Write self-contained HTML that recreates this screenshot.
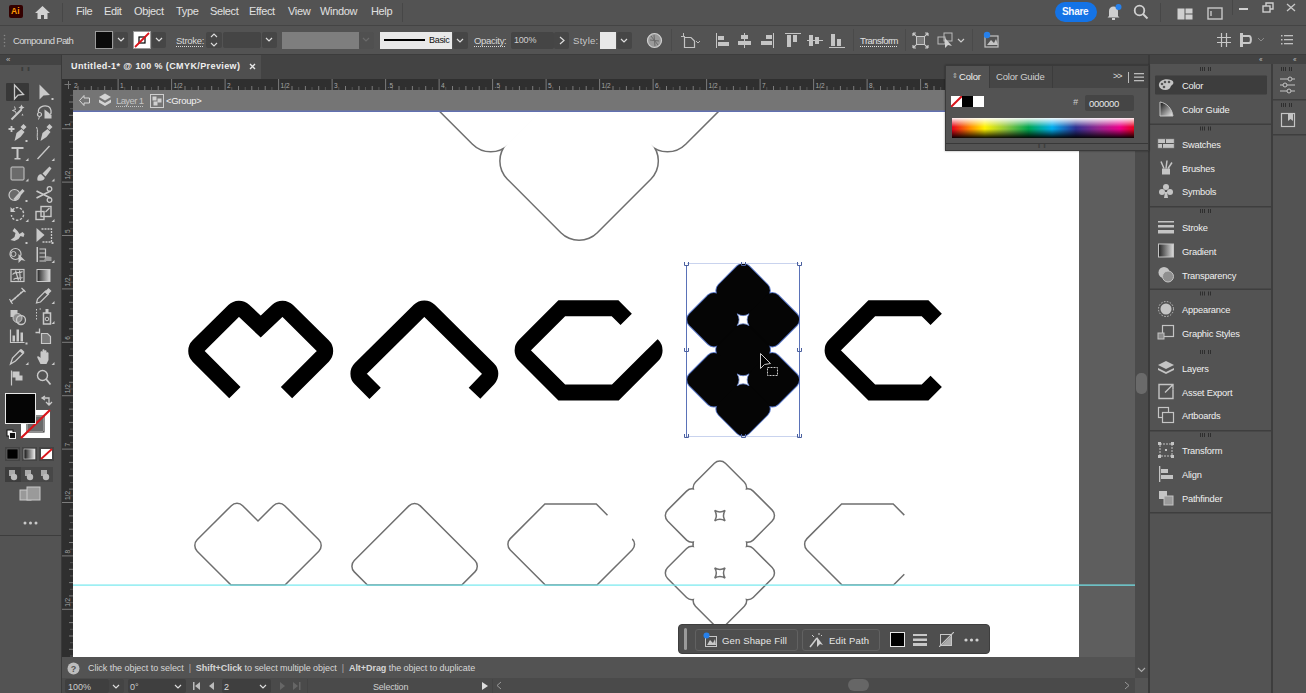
<!DOCTYPE html>
<html><head><meta charset="utf-8"><title>Illustrator</title>
<style>
*{margin:0;padding:0;box-sizing:border-box}
html,body{width:1306px;height:693px;overflow:hidden;background:#535353;font-family:"Liberation Sans",sans-serif;color:#e4e4e4;position:relative}
.abs{position:absolute}
.t{position:absolute;white-space:nowrap;line-height:1}
.menu{font-size:11px;color:#e0e0e0;top:6.3px;letter-spacing:-0.35px}
.lbl{font-size:9.5px;color:#d8d8d8;letter-spacing:-0.3px}
.u{text-decoration:underline dotted;text-underline-offset:2px}
.dd{position:absolute;background:#464646;border-radius:2px}
.fld{position:absolute;background:#454545;border-radius:2px}
.ic{position:absolute}
.dock{font-size:9px;color:#f2f2f2;letter-spacing:-0.2px}
.sep{position:absolute;background:#474747;width:1px}
</style></head><body>

<!-- ============ MENU BAR ============ -->
<div class="abs" style="left:0;top:0;width:1306px;height:25px;background:#535353"></div>
<div class="abs" style="left:0;top:25px;width:1306px;height:1px;background:#444"></div>
<!-- Ai logo -->
<div class="abs" style="left:9px;top:5px;width:14px;height:13px;background:#330000;border-radius:2px"></div>
<div class="t" style="left:11px;top:7px;font-size:8.5px;font-weight:bold;color:#ff9a00">Ai</div>
<!-- home -->
<svg class="ic" style="left:34px;top:5px" width="17" height="15" viewBox="0 0 17 15"><path d="M8.5,1 L16,8 L13.5,8 L13.5,14 L10,14 L10,10 L7,10 L7,14 L3.5,14 L3.5,8 L1,8 Z" fill="#d2d2d2"/></svg>
<div class="sep" style="left:62px;top:3px;height:19px"></div>
<div class="t menu" style="left:76px">File</div>
<div class="t menu" style="left:104px">Edit</div>
<div class="t menu" style="left:134px">Object</div>
<div class="t menu" style="left:176px">Type</div>
<div class="t menu" style="left:210px">Select</div>
<div class="t menu" style="left:249px">Effect</div>
<div class="t menu" style="left:288px">View</div>
<div class="t menu" style="left:320px">Window</div>
<div class="t menu" style="left:371px">Help</div>
<div class="sep" style="left:402px;top:3px;height:19px"></div>
<!-- share etc -->
<div class="abs" style="left:1055px;top:2px;width:42px;height:20px;background:#1473e6;border-radius:10px"></div>
<div class="t" style="left:1062px;top:7px;font-size:10px;font-weight:bold;color:#f4f8ff;letter-spacing:-0.3px">Share</div>
<svg class="ic" style="left:1106px;top:3px" width="16" height="18" viewBox="0 0 16 18"><path d="M3,13 L3,8 C3,5 5,3.5 7.5,3.5 C10,3.5 12,5 12,8 L12,13 L13.5,14.5 L1.5,14.5 Z" fill="#cfcfcf"/><rect x="6" y="15" width="3" height="2" fill="#cfcfcf"/><circle cx="12.5" cy="4" r="3" fill="#2680eb"/></svg>
<svg class="ic" style="left:1133px;top:4px" width="16" height="16" viewBox="0 0 16 16"><circle cx="6.5" cy="6.5" r="4.8" fill="none" stroke="#d0d0d0" stroke-width="1.8"/><path d="M10,10 L14.5,14.5" stroke="#d0d0d0" stroke-width="2"/></svg>
<div class="sep" style="left:1160px;top:3px;height:19px"></div>
<svg class="ic" style="left:1177px;top:8px" width="16" height="12" viewBox="0 0 16 12"><rect x="0.5" y="0.5" width="7" height="11" fill="#cfcfcf"/><rect x="8.5" y="0.5" width="7" height="5" fill="#cfcfcf"/><rect x="8.5" y="6.5" width="7" height="5" fill="#cfcfcf"/></svg>
<svg class="ic" style="left:1207px;top:7px" width="16" height="13" viewBox="0 0 16 13"><rect x="1" y="1" width="14" height="11" fill="none" stroke="#c8c8c8" stroke-width="1.4"/><rect x="3" y="4" width="2" height="5" fill="#c8c8c8" opacity=".7"/></svg>
<div class="sep" style="left:1232px;top:0;height:15px"></div>
<div class="abs" style="left:1239px;top:8px;width:9px;height:2px;background:#cfcfcf"></div>
<svg class="ic" style="left:1262px;top:2px" width="12" height="11" viewBox="0 0 12 11"><rect x="1" y="4" width="7" height="6" fill="none" stroke="#cfcfcf" stroke-width="1.4"/><path d="M4,4 L4,1 L11,1 L11,7 L8,7" fill="none" stroke="#cfcfcf" stroke-width="1.4"/></svg>
<svg class="ic" style="left:1286px;top:3px" width="10" height="9" viewBox="0 0 10 9"><path d="M1,1 L9,8 M9,1 L1,8" stroke="#c8c8c8" stroke-width="1.3"/></svg>

<!-- ============ CONTROL BAR ============ -->
<div class="abs" style="left:0;top:26px;width:1306px;height:28px;background:#535353"></div>
<div class="abs" style="left:0;top:54px;width:1306px;height:1px;background:#3c3c3c"></div>
<svg class="ic" style="left:3px;top:34px" width="3" height="14"><circle cx="1.5" cy="1.5" r="0.8" fill="#888"/><circle cx="1.5" cy="5" r="0.8" fill="#888"/><circle cx="1.5" cy="8.5" r="0.8" fill="#888"/><circle cx="1.5" cy="12" r="0.8" fill="#888"/></svg>
<div class="t lbl" style="left:13px;top:36px;letter-spacing:-0.65px">Compound Path</div>
<!-- fill swatch -->
<div class="abs" style="left:95px;top:31px;width:18px;height:18px;background:#0a0a0a;border:1px solid #9a9a9a"></div>
<div class="dd" style="left:114px;top:32px;width:14px;height:16px"></div>
<svg class="ic" style="left:117px;top:37px" width="8" height="5"><path d="M1,1 L4,4 L7,1" fill="none" stroke="#ddd" stroke-width="1.2"/></svg>
<!-- stroke swatch -->
<div class="abs" style="left:133px;top:31px;width:18px;height:18px;background:#fff;border:1px solid #9a9a9a;overflow:hidden"></div>
<svg class="ic" style="left:134px;top:32px" width="16" height="16"><rect x="5" y="5" width="6" height="6" fill="none" stroke="#000" stroke-width="1.2"/><path d="M1,15 L15,1" stroke="#d9141a" stroke-width="1.8"/></svg>
<div class="dd" style="left:152px;top:32px;width:14px;height:16px"></div>
<svg class="ic" style="left:155px;top:37px" width="8" height="5"><path d="M1,1 L4,4 L7,1" fill="none" stroke="#ddd" stroke-width="1.2"/></svg>
<div class="t lbl u" style="left:176px;top:36px">Stroke:</div>
<div class="dd" style="left:206px;top:32px;width:16px;height:16px"></div>
<svg class="ic" style="left:210px;top:33px" width="8" height="14"><path d="M1,4 L4,1 L7,4 M1,10 L4,13 L7,10" fill="none" stroke="#ddd" stroke-width="1.1"/></svg>
<div class="fld" style="left:223px;top:32px;width:38px;height:16px"></div>
<div class="dd" style="left:262px;top:32px;width:15px;height:16px"></div>
<svg class="ic" style="left:265px;top:37px" width="8" height="5"><path d="M1,1 L4,4 L7,1" fill="none" stroke="#ddd" stroke-width="1.2"/></svg>
<div class="abs" style="left:282px;top:32px;width:77px;height:17px;background:#7e7e7e"></div>
<div class="dd" style="left:359px;top:32px;width:15px;height:17px;background:#505050"></div>
<svg class="ic" style="left:362px;top:37px" width="8" height="5"><path d="M1,1 L4,4 L7,1" fill="none" stroke="#6a6a6a" stroke-width="1.2"/></svg>
<!-- stroke profile -->
<div class="abs" style="left:380px;top:32px;width:72px;height:17px;background:#e9e9e9"></div>
<div class="abs" style="left:384px;top:39px;width:41px;height:2px;background:#000"></div>
<div class="t" style="left:429px;top:36px;font-size:9px;color:#111;letter-spacing:-0.3px">Basic</div>
<div class="dd" style="left:453px;top:32px;width:15px;height:17px"></div>
<svg class="ic" style="left:456px;top:38px" width="8" height="5"><path d="M1,1 L4,4 L7,1" fill="none" stroke="#ddd" stroke-width="1.2"/></svg>
<div class="t lbl u" style="left:474px;top:36px">Opacity:</div>
<div class="fld" style="left:511px;top:32px;width:43px;height:17px"></div>
<div class="t" style="left:514px;top:36px;font-size:9px;color:#cfcfcf;letter-spacing:-0.2px">100%</div>
<div class="dd" style="left:554px;top:32px;width:15px;height:17px"></div>
<svg class="ic" style="left:559px;top:36px" width="6" height="9"><path d="M1,1 L5,4.5 L1,8" fill="none" stroke="#ddd" stroke-width="1.2"/></svg>
<div class="t lbl" style="left:573px;top:36px;color:#c8c8c8;letter-spacing:0.3px">Style:</div>
<div class="abs" style="left:600px;top:32px;width:16px;height:17px;background:#e8e8e8"></div>
<div class="dd" style="left:617px;top:32px;width:15px;height:17px"></div>
<svg class="ic" style="left:620px;top:38px" width="8" height="5"><path d="M1,1 L4,4 L7,1" fill="none" stroke="#ddd" stroke-width="1.2"/></svg>
<svg class="ic" style="left:646px;top:32px" width="17" height="17"><circle cx="8.5" cy="8.5" r="7" fill="#9a9a9a" stroke="#cfcfcf" stroke-width="1.2"/><path d="M4,8 L13,9 M8,3 L9,14 M5,4 L12,13" stroke="#6a6a6a" stroke-width="1"/></svg>
<div class="sep" style="left:671px;top:29px;height:22px;background:#4a4a4a"></div>
<!-- artboard icon -->
<svg class="ic" style="left:680px;top:32px" width="22" height="17"><path d="M3.5,1 L3.5,5 M1,4.5 L5,4.5" stroke="#bdbdbd" stroke-width="1"/><path d="M4.5,5.5 L11,5.5 L14.5,9 L14.5,15.5 L4.5,15.5 Z" fill="none" stroke="#c4c4c4" stroke-width="1.2"/><path d="M16,9 L18,11 L20,9" fill="none" stroke="#bdbdbd" stroke-width="1"/></svg>
<!-- align icons -->
<svg class="ic" style="left:715px;top:32px" width="132" height="17" fill="#c4c4c4">
<rect x="1" y="1" width="1" height="15"/><rect x="3" y="4" width="6" height="4"/><rect x="3" y="10" width="11" height="4"/>
<rect x="29" y="1" width="1" height="15"/><rect x="26" y="3" width="7" height="4"/><rect x="23" y="9" width="13" height="4"/>
<rect x="58" y="1" width="1" height="15"/><rect x="51" y="3" width="6" height="4"/><rect x="46" y="9" width="11" height="4"/>
<rect x="70" y="1" width="16" height="1"/><rect x="72" y="3" width="4" height="12"/><rect x="78" y="3" width="4" height="7"/>
<rect x="92" y="8" width="16" height="1"/><rect x="94" y="3" width="4" height="11"/><rect x="100" y="5" width="4" height="7"/>
<rect x="114" y="15" width="16" height="1"/><rect x="116" y="2" width="4" height="12"/><rect x="122" y="7" width="4" height="7"/>
</svg>
<div class="sep" style="left:853px;top:29px;height:22px;background:#4a4a4a"></div>
<div class="t lbl u" style="left:860px;top:36px;color:#e0e0e0;letter-spacing:-0.55px">Transform</div>
<div class="sep" style="left:905px;top:29px;height:22px;background:#4a4a4a"></div>
<svg class="ic" style="left:912px;top:32px" width="17" height="17"><rect x="4.5" y="4.5" width="8" height="8" fill="#7a7a7a" stroke="#c8c8c8" stroke-width="1"/><path d="M1,1 L4,4 M16,1 L13,4 M1,16 L4,13 M16,16 L13,13 M1,1 L1,4 M1,1 L4,1 M16,1 L13,1 M16,1 L16,4 M1,16 L1,13 M1,16 L4,16 M16,16 L13,16 M16,16 L16,13" stroke="#c8c8c8" stroke-width="1.2"/></svg>
<svg class="ic" style="left:937px;top:32px" width="30" height="17"><rect x="1" y="5" width="7" height="7" fill="none" stroke="#bbb" stroke-width="1"/><rect x="7" y="1" width="8" height="8" fill="none" stroke="#bbb" stroke-width="1"/><path d="M8,6 L8,16 L11,13 L15,14 Z" fill="#cfcfcf"/><path d="M21,7 L24,10 L27,7" fill="none" stroke="#ccc" stroke-width="1.2"/></svg>
<div class="sep" style="left:972px;top:29px;height:22px;background:#4a4a4a"></div>
<svg class="ic" style="left:983px;top:31px" width="18" height="18"><rect x="2" y="5" width="13" height="11" fill="none" stroke="#c4c4c4" stroke-width="1.2"/><path d="M4,14 L8,9 L11,12 L13,8 L15,14 Z" fill="#c4c4c4"/><circle cx="4" cy="4" r="3.2" fill="#2680eb"/></svg>
<!-- right of control bar -->
<svg class="ic" style="left:1217px;top:33px" width="14" height="14"><path d="M4.5,0 L4.5,14 M9.5,0 L9.5,14 M0,4.5 L14,4.5 M0,9.5 L14,9.5" stroke="#c8c8c8" stroke-width="1.2"/></svg>
<svg class="ic" style="left:1239px;top:32px" width="28" height="16"><rect x="1" y="1" width="3" height="14" fill="#c8c8c8"/><path d="M4,4 L10,4 C12.5,4 12.5,11 10,11 L4,11" fill="none" stroke="#c8c8c8" stroke-width="2"/><path d="M19,6 L22,9 L25,6" fill="none" stroke="#8a8a8a" stroke-width="1"/></svg>
<svg class="ic" style="left:1281px;top:35px" width="12" height="10" fill="#c0c0c0"><rect x="0" y="0" width="1.5" height="1.5"/><rect x="3" y="0" width="9" height="1.3"/><rect x="0" y="4" width="1.5" height="1.5"/><rect x="3" y="4" width="9" height="1.3"/><rect x="0" y="8" width="1.5" height="1.5"/><rect x="3" y="8" width="9" height="1.3"/></svg>

<!-- ============ LEFT TOOLBAR ============ -->
<div class="abs" style="left:0;top:55px;width:61px;height:638px;background:#535353"></div>
<div class="abs" style="left:0;top:55px;width:61px;height:10px;background:#434343"></div>
<div class="t" style="left:6px;top:56px;font-size:8px;color:#bbb;letter-spacing:-1px">&lsaquo;&lsaquo;</div>
<div class="abs" style="left:61px;top:55px;width:1px;height:638px;background:#3a3a3a"></div>
<div class="abs" style="left:0;top:535px;width:61px;height:1px;background:#3d3d3d"></div>
<div class="t" style="left:21px;top:66px;font-size:6px;color:#2a2a2a;letter-spacing:1px">&#8214; &#8214;</div>
<svg class="ic" style="left:0;top:0" width="61" height="540" viewBox="0 0 61 540">
<rect x="6" y="83" width="23" height="18" rx="1" fill="#383838"/>
<g transform="translate(17.5,92)"><path d="M-3,-7 L-3,7 L0.5,3 L6,2.5 Z" fill="none" stroke="#c9c9c9" stroke-width="1.3" stroke-linejoin="miter"/></g>
<g transform="translate(43.5,92)"><path d="M-4,-7.5 L-4,7.5 L0,3.5 L6.5,3 Z" fill="#c9c9c9"/><rect x="8" y="6" width="2" height="2" fill="#c9c9c9"/></g>
<g transform="translate(17.5,112.5)"><path d="M-6,7 L4,-3" stroke="#c9c9c9" stroke-width="2"/><path d="M-3,-6 L-2,-3 L-5,-2 L-2,-1 L-1,2" fill="none" stroke="#c9c9c9" stroke-width="1"/><path d="M4,-8 L5,-6 L7,-5 L5,-4 L4,-2 L3,-4 L1,-5 L3,-6Z" fill="#c9c9c9"/><path d="M5,1 L6,3 L4,3Z" fill="#c9c9c9"/></g>
<g transform="translate(43.5,112.5)"><path d="M-5,0 C-6,-5 0,-8 5,-6 C8,-4 8,0 7,2" fill="none" stroke="#c9c9c9" stroke-width="1.3"/><circle cx="-4" cy="2" r="2" fill="none" stroke="#c9c9c9" stroke-width="1.2"/><path d="M-4,4 L-5,7" stroke="#c9c9c9" stroke-width="1"/><path d="M1,-3 L1,6 L8,6 L8,3 L5,0 Z" fill="#c9c9c9"/></g>
<g transform="translate(17.5,133)"><path d="M-9,-4 L-3,-4 M-6,-7 L-6,-1" stroke="#c9c9c9" stroke-width="1.8"/><path d="M-3,8 L-1,0 L4,-4 L7,-1 L3,4 Z" fill="#c9c9c9"/><path d="M3,-6 L6,-9 L9,-6 L6,-3Z" fill="#c9c9c9"/><rect x="8" y="7" width="2" height="2" fill="#c9c9c9"/></g>
<g transform="translate(43.5,133)"><path d="M-7,-6 C-5,-3 -7,2 -6,7" fill="none" stroke="#c9c9c9" stroke-width="1"/><path d="M-3,8 L-1,0 L4,-4 L7,-1 L3,4 Z" fill="#c9c9c9"/><path d="M3,-6 L6,-9 L9,-6 L6,-3Z" fill="#c9c9c9"/></g>
<g transform="translate(17.5,153)"><path d="M-6,-6 L6,-6 L6,-4 L1,-4 L1,5 L3,5 L3,6.5 L-3,6.5 L-3,5 L-1,5 L-1,-4 L-6,-4 Z" fill="#c9c9c9"/><path d="M11,5 L11,8 L8,8Z" fill="#c9c9c9"/></g>
<g transform="translate(43.5,153)"><path d="M-6,6 L6,-7" stroke="#c9c9c9" stroke-width="1.3"/><path d="M11,5 L11,8 L8,8Z" fill="#c9c9c9"/></g>
<g transform="translate(17.5,173.5)"><rect x="-6.5" y="-6.5" width="13" height="13" rx="1" fill="#6b6b6b" stroke="#c9c9c9" stroke-width="1"/><path d="M11,5 L11,8 L8,8Z" fill="#c9c9c9"/></g>
<g transform="translate(43.5,173.5)"><path d="M-6,7 C-7,3 -4,0 -2,1 L1,4 C2,6 -2,8 -6,7Z" fill="#c9c9c9"/><path d="M-1,0 L6,-7 L8,-5 L2,3 Z" fill="#c9c9c9"/><path d="M11,5 L11,8 L8,8Z" fill="#c9c9c9"/></g>
<g transform="translate(17.5,194)"><circle cx="-3" cy="1" r="5.5" fill="#6b6b6b" stroke="#c9c9c9" stroke-width="1.2"/><path d="M-3,6 L6,-4" stroke="#c9c9c9" stroke-width="3"/><rect x="8" y="6" width="2" height="2" fill="#c9c9c9"/></g>
<g transform="translate(43.5,194)"><path d="M-7,-3 L7,4 M-7,4 L7,-3" stroke="#c9c9c9" stroke-width="1.8"/><circle cx="6" cy="-5" r="2.3" fill="none" stroke="#c9c9c9" stroke-width="1.3"/><circle cx="6" cy="6" r="2.3" fill="none" stroke="#c9c9c9" stroke-width="1.3"/></g>
<g transform="translate(17.5,214)"><path d="M-5,-4 C-2,-8 5,-7 6,-1 C7,4 2,7 -2,6 C-5,5 -6,3 -6,1" fill="none" stroke="#c9c9c9" stroke-width="1.4" stroke-dasharray="2.5,1.5"/><path d="M-7,-7 L-7,-2 L-2,-2 Z" fill="#c9c9c9"/><path d="M11,5 L11,8 L8,8Z" fill="#c9c9c9"/></g>
<g transform="translate(43.5,214)"><rect x="-2.5" y="-7.5" width="10" height="10" fill="none" stroke="#c9c9c9" stroke-width="1.4"/><rect x="-7.5" y="-2.5" width="8" height="8" fill="none" stroke="#c9c9c9" stroke-width="1.4"/><path d="M2,-2 L6,-6" stroke="#c9c9c9" stroke-width="1.2"/><path d="M11,5 L11,8 L8,8Z" fill="#c9c9c9"/></g>
<g transform="translate(17.5,235)"><path d="M-7,5 L-3,2 L-2,-2 L-5,-4 L-3,-7 L0,-4 L2,-1 L5,-3 L7,-1 L6,2 L3,1 L1,4 L-3,6 Z" fill="#c9c9c9"/><rect x="8" y="7" width="2" height="2" fill="#c9c9c9"/></g>
<g transform="translate(43.5,235)"><path d="M-7,-7 L-7,7 L1,0 Z" fill="#c9c9c9"/><path d="M-2,-6 L8,-6 L8,7 L-2,7" fill="none" stroke="#c9c9c9" stroke-width="1.3" stroke-dasharray="2,1"/><rect x="8" y="7" width="2" height="2" fill="#c9c9c9"/></g>
<g transform="translate(17.5,255)"><circle cx="-2" cy="-1" r="5.5" fill="none" stroke="#c9c9c9" stroke-width="1.2"/><circle cx="-4" cy="-1" r="2.5" fill="none" stroke="#c9c9c9" stroke-width="1"/><path d="M1,-1 L1,8 L4,5 L8,6 Z" fill="#c9c9c9"/></g>
<g transform="translate(43.5,255)"><rect x="-7" y="-8" width="1.5" height="15" fill="#c9c9c9"/><path d="M-4,-6 L2,-6 L2,6 L-4,6 M-4,-2 L2,-2 M-4,2 L2,2" fill="none" stroke="#c9c9c9" stroke-width="1.2"/><path d="M0,6 L8,6 L8,2 L3,1Z" fill="#9a9a9a"/><path d="M11,5 L11,8 L8,8Z" fill="#c9c9c9"/></g>
<g transform="translate(17.5,275.5)"><rect x="-6.5" y="-6" width="13" height="12" fill="none" stroke="#c9c9c9" stroke-width="1.2"/><path d="M-5,-1 C-2,-5 1,-1 5,-4 M-4,4 C-1,1 2,4 5,2 M-2,-5 L1,5 M2,-5 L3,5" fill="none" stroke="#c9c9c9" stroke-width="1.2"/></g>
<g transform="translate(43.5,275.5)"><defs><linearGradient id="gg"><stop offset="0" stop-color="#222"/><stop offset="1" stop-color="#ddd"/></linearGradient></defs><rect x="-6.5" y="-6" width="13" height="12" fill="url(#gg)" stroke="#c9c9c9" stroke-width="1"/></g>
<g transform="translate(17.5,296)"><path d="M-7,6 L7,-6" stroke="#c9c9c9" stroke-width="1.6"/><path d="M-8,3 L-5,8 M4,-8 L8,-4 M-3,2 L-2,3 M0,-1 L1,0 M3,-4 L4,-3" stroke="#c9c9c9" stroke-width="1.2"/></g>
<g transform="translate(43.5,296)"><path d="M-7,7 L-6,3 L2,-5 L5,-2 L-3,6 Z" fill="none" stroke="#c9c9c9" stroke-width="1.2"/><path d="M1,-4 L5,-8 L8,-5 L4,-1Z" fill="#c9c9c9"/><path d="M11,5 L11,8 L8,8Z" fill="#c9c9c9"/></g>
<g transform="translate(17.5,316)"><rect x="-7" y="-6" width="7" height="7" fill="#c9c9c9"/><circle cx="0" cy="2" r="4.5" fill="#8a8a8a" stroke="#c9c9c9" stroke-width="1"/><circle cx="3.5" cy="4" r="4.5" fill="none" stroke="#c9c9c9" stroke-width="1.3"/></g>
<g transform="translate(43.5,316)"><path d="M-7,-7 L-7,5 M-4,-7 L-2,-7" stroke="#c9c9c9" stroke-width="1" stroke-dasharray="1.5,1.5"/><path d="M0,-3 L7,-3 L7,8 L0,8 Z" fill="none" stroke="#c9c9c9" stroke-width="1.5"/><rect x="2" y="-7" width="3" height="4" fill="#c9c9c9"/><circle cx="3.5" cy="3" r="1.8" fill="none" stroke="#c9c9c9" stroke-width="1"/><path d="M11,5 L11,8 L8,8Z" fill="#c9c9c9"/></g>
<g transform="translate(17.5,336.5)"><path d="M-7,-7 L-7,6 L7,6" fill="none" stroke="#c9c9c9" stroke-width="1.2"/><rect x="-5" y="-1" width="2.5" height="6" fill="#c9c9c9"/><rect x="-1" y="-7" width="2.5" height="12" fill="#c9c9c9"/><rect x="3" y="-4" width="2.5" height="9" fill="#c9c9c9"/><rect x="8" y="6" width="2" height="2" fill="#c9c9c9"/></g>
<g transform="translate(43.5,336.5)"><path d="M-4,-8 L-4,-3 M-8,-4 L-4,-4" stroke="#c9c9c9" stroke-width="1.3"/><path d="M-2,-3 L4,-3 L7,0 L7,7 L-2,7 Z" fill="#7a7a7a" stroke="#c9c9c9" stroke-width="1.2"/></g>
<g transform="translate(17.5,357)"><path d="M-7,7 L-5,1 L3,-7 L6,-4 L-2,4 Z" fill="none" stroke="#c9c9c9" stroke-width="1.3"/><path d="M2,-6 L5,-3 L7,-5 L4,-8Z" fill="#c9c9c9"/><path d="M11,5 L11,8 L8,8Z" fill="#c9c9c9"/></g>
<g transform="translate(43.5,357)"><path d="M-3,7 L-6,1 C-7,-1 -5,-1 -4,0 L-3,1 L-3,-5 C-3,-6 -1,-6 -1,-5 L-1,-1 L-1,-7 C-1,-8 1,-8 1,-7 L1,-1 L1,-6 C1,-7 3,-7 3,-6 L3,-1 L3,-4 C3,-5 5,-5 5,-4 L5,3 L3,7 Z" fill="#c9c9c9"/><path d="M11,5 L11,8 L8,8Z" fill="#c9c9c9"/></g>
<g transform="translate(17.5,377.5)"><path d="M-6,-7 L-6,8" stroke="#c9c9c9" stroke-width="1.2"/><path d="M-5,-6 L2,-6 L2,-2 L5,-2 L5,3 L-2,3 L-2,0 L-5,0 Z" fill="#c9c9c9"/></g>
<g transform="translate(43.5,377.5)"><circle cx="-1" cy="-2" r="5" fill="none" stroke="#c9c9c9" stroke-width="1.4"/><path d="M2.5,1.5 L7,7" stroke="#c9c9c9" stroke-width="1.8"/></g>
<rect x="20.5" y="409.5" width="30" height="29" fill="#fff" stroke="#555" stroke-width="1"/>
<rect x="27" y="416" width="17" height="16" fill="none" stroke="#222" stroke-width="1"/><rect x="28" y="417" width="15" height="14" fill="#6a6a6a"/>
<path d="M21,438 L50,410" stroke="#d9141a" stroke-width="2.2"/>
<rect x="5.5" y="393.5" width="30" height="30" fill="#050505" stroke="#e8e8e8" stroke-width="1"/>
<path d="M42,398 L49,398 L49,405 M46,402 L49,405 L52,402 M45,396 L42,398 L45,400" fill="none" stroke="#c9c9c9" stroke-width="1.3"/>
<rect x="7" y="430" width="6" height="6" fill="#fff" stroke="#111" stroke-width="1"/><rect x="9.5" y="432.5" width="6" height="6" fill="#111" stroke="#eee" stroke-width="1"/>
<rect x="5" y="447" width="15" height="14" fill="#444"/><rect x="7" y="449" width="11" height="10" fill="#000" stroke="#777" stroke-width=".6"/>
<defs><linearGradient id="g2"><stop offset="0" stop-color="#111"/><stop offset="1" stop-color="#eee"/></linearGradient></defs>
<rect x="22" y="447" width="15" height="14" fill="#444"/><rect x="24" y="449" width="11" height="10" fill="url(#g2)" stroke="#ddd" stroke-width=".6"/>
<rect x="39" y="447" width="15" height="14" fill="#444"/><rect x="41" y="449" width="11" height="10" fill="#fff"/><path d="M41,459 L52,449" stroke="#d9141a" stroke-width="1.8"/>
<rect x="5" y="467" width="16" height="15" fill="#3d3d3d"/><rect x="21" y="467" width="16" height="15" fill="#474747"/><rect x="37" y="467" width="16" height="15" fill="#474747"/>
<rect x="9" y="470" width="6" height="6" fill="#aaa"/><circle cx="14" cy="477" r="3.2" fill="#bbb"/>
<rect x="25" y="470" width="6" height="6" fill="#aaa"/><circle cx="30" cy="477" r="3.2" fill="#bbb"/>
<rect x="41" y="470" width="6" height="6" fill="#aaa"/><circle cx="46" cy="477" r="3.2" fill="#bbb"/>
<rect x="20" y="490" width="11" height="10" fill="#999" stroke="#c9c9c9" stroke-width="1"/><rect x="27" y="487" width="13" height="13" fill="#9a9a9a" stroke="#c9c9c9" stroke-width="1"/>
<circle cx="25" cy="523" r="1.5" fill="#c9c9c9"/><circle cx="30.5" cy="523" r="1.5" fill="#c9c9c9"/><circle cx="36" cy="523" r="1.5" fill="#c9c9c9"/>
</svg>

<!-- ============ DOCUMENT AREA ============ -->
<div class="abs" style="left:62px;top:55px;width:1086px;height:24px;background:#434343"></div>
<div class="abs" style="left:62px;top:55px;width:199px;height:24px;background:#4f4f4f"></div>
<div class="t" style="left:71px;top:62.3px;font-size:9px;font-weight:bold;color:#f0f0f0;letter-spacing:0.4px">Untitled-1* @ 100 % (CMYK/Preview)</div>
<svg class="ic" style="left:249px;top:63px" width="7" height="7"><path d="M1,1 L6,6 M6,1 L1,6" stroke="#e8e8e8" stroke-width="1.4"/></svg>
<!-- rulers -->
<div class="abs" style="left:62px;top:79px;width:1086px;height:11px;background:#2f2f2f"></div>
<div class="abs" style="left:62px;top:90px;width:11px;height:567px;background:#2f2f2f"></div>
<svg class="ic" style="left:62px;top:79px" width="1086" height="578" viewBox="62 79 1086 578">
<rect x="77.5" y="86" width="1" height="4" fill="#7c7c7c"/>
<rect x="84.2" y="87" width="1" height="3" fill="#555555"/>
<rect x="90.8" y="86" width="1" height="4" fill="#7c7c7c"/>
<rect x="97.5" y="87" width="1" height="3" fill="#555555"/>
<rect x="104.2" y="86" width="1" height="4" fill="#7c7c7c"/>
<rect x="110.9" y="87" width="1" height="3" fill="#555555"/>
<rect x="117.6" y="79" width="1" height="11" fill="#7c7c7c"/>
<rect x="124.3" y="87" width="1" height="3" fill="#555555"/>
<rect x="131.0" y="86" width="1" height="4" fill="#7c7c7c"/>
<rect x="137.7" y="87" width="1" height="3" fill="#555555"/>
<rect x="144.3" y="86" width="1" height="4" fill="#7c7c7c"/>
<rect x="151.0" y="87" width="1" height="3" fill="#555555"/>
<rect x="157.7" y="86" width="1" height="4" fill="#7c7c7c"/>
<rect x="164.4" y="87" width="1" height="3" fill="#555555"/>
<text x="120.1" y="87.5" font-size="6.5" fill="#a8a8a8" font-family="Liberation Sans">1</text>
<rect x="171.1" y="79" width="1" height="11" fill="#7c7c7c"/>
<rect x="177.8" y="87" width="1" height="3" fill="#555555"/>
<rect x="184.5" y="86" width="1" height="4" fill="#7c7c7c"/>
<rect x="191.2" y="87" width="1" height="3" fill="#555555"/>
<rect x="197.8" y="86" width="1" height="4" fill="#7c7c7c"/>
<rect x="204.5" y="87" width="1" height="3" fill="#555555"/>
<rect x="211.2" y="86" width="1" height="4" fill="#7c7c7c"/>
<rect x="217.9" y="87" width="1" height="3" fill="#555555"/>
<text x="173.6" y="87.5" font-size="6.5" fill="#a8a8a8" font-family="Liberation Sans">1/2</text>
<rect x="224.6" y="79" width="1" height="11" fill="#7c7c7c"/>
<rect x="231.3" y="87" width="1" height="3" fill="#555555"/>
<rect x="238.0" y="86" width="1" height="4" fill="#7c7c7c"/>
<rect x="244.7" y="87" width="1" height="3" fill="#555555"/>
<rect x="251.3" y="86" width="1" height="4" fill="#7c7c7c"/>
<rect x="258.0" y="87" width="1" height="3" fill="#555555"/>
<rect x="264.7" y="86" width="1" height="4" fill="#7c7c7c"/>
<rect x="271.4" y="87" width="1" height="3" fill="#555555"/>
<text x="227.1" y="87.5" font-size="6.5" fill="#a8a8a8" font-family="Liberation Sans">2</text>
<rect x="278.1" y="79" width="1" height="11" fill="#7c7c7c"/>
<rect x="284.8" y="87" width="1" height="3" fill="#555555"/>
<rect x="291.5" y="86" width="1" height="4" fill="#7c7c7c"/>
<rect x="298.2" y="87" width="1" height="3" fill="#555555"/>
<rect x="304.9" y="86" width="1" height="4" fill="#7c7c7c"/>
<rect x="311.5" y="87" width="1" height="3" fill="#555555"/>
<rect x="318.2" y="86" width="1" height="4" fill="#7c7c7c"/>
<rect x="324.9" y="87" width="1" height="3" fill="#555555"/>
<text x="280.6" y="87.5" font-size="6.5" fill="#a8a8a8" font-family="Liberation Sans">1/2</text>
<rect x="331.6" y="79" width="1" height="11" fill="#7c7c7c"/>
<rect x="338.3" y="87" width="1" height="3" fill="#555555"/>
<rect x="345.0" y="86" width="1" height="4" fill="#7c7c7c"/>
<rect x="351.7" y="87" width="1" height="3" fill="#555555"/>
<rect x="358.4" y="86" width="1" height="4" fill="#7c7c7c"/>
<rect x="365.0" y="87" width="1" height="3" fill="#555555"/>
<rect x="371.7" y="86" width="1" height="4" fill="#7c7c7c"/>
<rect x="378.4" y="87" width="1" height="3" fill="#555555"/>
<text x="334.1" y="87.5" font-size="6.5" fill="#a8a8a8" font-family="Liberation Sans">3</text>
<rect x="385.1" y="79" width="1" height="11" fill="#7c7c7c"/>
<rect x="391.8" y="87" width="1" height="3" fill="#555555"/>
<rect x="398.5" y="86" width="1" height="4" fill="#7c7c7c"/>
<rect x="405.2" y="87" width="1" height="3" fill="#555555"/>
<rect x="411.9" y="86" width="1" height="4" fill="#7c7c7c"/>
<rect x="418.5" y="87" width="1" height="3" fill="#555555"/>
<rect x="425.2" y="86" width="1" height="4" fill="#7c7c7c"/>
<rect x="431.9" y="87" width="1" height="3" fill="#555555"/>
<text x="387.6" y="87.5" font-size="6.5" fill="#a8a8a8" font-family="Liberation Sans">.5</text>
<rect x="438.6" y="79" width="1" height="11" fill="#7c7c7c"/>
<rect x="445.3" y="87" width="1" height="3" fill="#555555"/>
<rect x="452.0" y="86" width="1" height="4" fill="#7c7c7c"/>
<rect x="458.7" y="87" width="1" height="3" fill="#555555"/>
<rect x="465.4" y="86" width="1" height="4" fill="#7c7c7c"/>
<rect x="472.0" y="87" width="1" height="3" fill="#555555"/>
<rect x="478.7" y="86" width="1" height="4" fill="#7c7c7c"/>
<rect x="485.4" y="87" width="1" height="3" fill="#555555"/>
<text x="441.1" y="87.5" font-size="6.5" fill="#a8a8a8" font-family="Liberation Sans">4</text>
<rect x="492.1" y="79" width="1" height="11" fill="#7c7c7c"/>
<rect x="498.8" y="87" width="1" height="3" fill="#555555"/>
<rect x="505.5" y="86" width="1" height="4" fill="#7c7c7c"/>
<rect x="512.2" y="87" width="1" height="3" fill="#555555"/>
<rect x="518.9" y="86" width="1" height="4" fill="#7c7c7c"/>
<rect x="525.5" y="87" width="1" height="3" fill="#555555"/>
<rect x="532.2" y="86" width="1" height="4" fill="#7c7c7c"/>
<rect x="538.9" y="87" width="1" height="3" fill="#555555"/>
<text x="494.6" y="87.5" font-size="6.5" fill="#a8a8a8" font-family="Liberation Sans">.5</text>
<rect x="545.6" y="79" width="1" height="11" fill="#7c7c7c"/>
<rect x="552.3" y="87" width="1" height="3" fill="#555555"/>
<rect x="559.0" y="86" width="1" height="4" fill="#7c7c7c"/>
<rect x="565.7" y="87" width="1" height="3" fill="#555555"/>
<rect x="572.4" y="86" width="1" height="4" fill="#7c7c7c"/>
<rect x="579.0" y="87" width="1" height="3" fill="#555555"/>
<rect x="585.7" y="86" width="1" height="4" fill="#7c7c7c"/>
<rect x="592.4" y="87" width="1" height="3" fill="#555555"/>
<text x="548.1" y="87.5" font-size="6.5" fill="#a8a8a8" font-family="Liberation Sans">5</text>
<rect x="599.1" y="79" width="1" height="11" fill="#7c7c7c"/>
<rect x="605.8" y="87" width="1" height="3" fill="#555555"/>
<rect x="612.5" y="86" width="1" height="4" fill="#7c7c7c"/>
<rect x="619.2" y="87" width="1" height="3" fill="#555555"/>
<rect x="625.9" y="86" width="1" height="4" fill="#7c7c7c"/>
<rect x="632.5" y="87" width="1" height="3" fill="#555555"/>
<rect x="639.2" y="86" width="1" height="4" fill="#7c7c7c"/>
<rect x="645.9" y="87" width="1" height="3" fill="#555555"/>
<text x="601.6" y="87.5" font-size="6.5" fill="#a8a8a8" font-family="Liberation Sans">1/2</text>
<rect x="652.6" y="79" width="1" height="11" fill="#7c7c7c"/>
<rect x="659.3" y="87" width="1" height="3" fill="#555555"/>
<rect x="666.0" y="86" width="1" height="4" fill="#7c7c7c"/>
<rect x="672.7" y="87" width="1" height="3" fill="#555555"/>
<rect x="679.4" y="86" width="1" height="4" fill="#7c7c7c"/>
<rect x="686.0" y="87" width="1" height="3" fill="#555555"/>
<rect x="692.7" y="86" width="1" height="4" fill="#7c7c7c"/>
<rect x="699.4" y="87" width="1" height="3" fill="#555555"/>
<text x="655.1" y="87.5" font-size="6.5" fill="#a8a8a8" font-family="Liberation Sans">6</text>
<rect x="706.1" y="79" width="1" height="11" fill="#7c7c7c"/>
<rect x="712.8" y="87" width="1" height="3" fill="#555555"/>
<rect x="719.5" y="86" width="1" height="4" fill="#7c7c7c"/>
<rect x="726.2" y="87" width="1" height="3" fill="#555555"/>
<rect x="732.9" y="86" width="1" height="4" fill="#7c7c7c"/>
<rect x="739.5" y="87" width="1" height="3" fill="#555555"/>
<rect x="746.2" y="86" width="1" height="4" fill="#7c7c7c"/>
<rect x="752.9" y="87" width="1" height="3" fill="#555555"/>
<text x="708.6" y="87.5" font-size="6.5" fill="#a8a8a8" font-family="Liberation Sans">1/2</text>
<rect x="759.6" y="79" width="1" height="11" fill="#7c7c7c"/>
<rect x="766.3" y="87" width="1" height="3" fill="#555555"/>
<rect x="773.0" y="86" width="1" height="4" fill="#7c7c7c"/>
<rect x="779.7" y="87" width="1" height="3" fill="#555555"/>
<rect x="786.4" y="86" width="1" height="4" fill="#7c7c7c"/>
<rect x="793.0" y="87" width="1" height="3" fill="#555555"/>
<rect x="799.7" y="86" width="1" height="4" fill="#7c7c7c"/>
<rect x="806.4" y="87" width="1" height="3" fill="#555555"/>
<text x="762.1" y="87.5" font-size="6.5" fill="#a8a8a8" font-family="Liberation Sans">7</text>
<rect x="813.1" y="79" width="1" height="11" fill="#7c7c7c"/>
<rect x="819.8" y="87" width="1" height="3" fill="#555555"/>
<rect x="826.5" y="86" width="1" height="4" fill="#7c7c7c"/>
<rect x="833.2" y="87" width="1" height="3" fill="#555555"/>
<rect x="839.9" y="86" width="1" height="4" fill="#7c7c7c"/>
<rect x="846.5" y="87" width="1" height="3" fill="#555555"/>
<rect x="853.2" y="86" width="1" height="4" fill="#7c7c7c"/>
<rect x="859.9" y="87" width="1" height="3" fill="#555555"/>
<text x="815.6" y="87.5" font-size="6.5" fill="#a8a8a8" font-family="Liberation Sans">1/2</text>
<rect x="866.6" y="79" width="1" height="11" fill="#7c7c7c"/>
<rect x="873.3" y="87" width="1" height="3" fill="#555555"/>
<rect x="880.0" y="86" width="1" height="4" fill="#7c7c7c"/>
<rect x="886.7" y="87" width="1" height="3" fill="#555555"/>
<rect x="893.4" y="86" width="1" height="4" fill="#7c7c7c"/>
<rect x="900.0" y="87" width="1" height="3" fill="#555555"/>
<rect x="906.7" y="86" width="1" height="4" fill="#7c7c7c"/>
<rect x="913.4" y="87" width="1" height="3" fill="#555555"/>
<text x="869.1" y="87.5" font-size="6.5" fill="#a8a8a8" font-family="Liberation Sans">8</text>
<rect x="920.1" y="79" width="1" height="11" fill="#7c7c7c"/>
<rect x="926.8" y="87" width="1" height="3" fill="#555555"/>
<rect x="933.5" y="86" width="1" height="4" fill="#7c7c7c"/>
<rect x="940.2" y="87" width="1" height="3" fill="#555555"/>
<rect x="946.9" y="86" width="1" height="4" fill="#7c7c7c"/>
<rect x="953.5" y="87" width="1" height="3" fill="#555555"/>
<rect x="960.2" y="86" width="1" height="4" fill="#7c7c7c"/>
<rect x="966.9" y="87" width="1" height="3" fill="#555555"/>
<text x="922.6" y="87.5" font-size="6.5" fill="#a8a8a8" font-family="Liberation Sans">.5</text>
<rect x="973.6" y="79" width="1" height="11" fill="#7c7c7c"/>
<rect x="980.3" y="87" width="1" height="3" fill="#555555"/>
<rect x="987.0" y="86" width="1" height="4" fill="#7c7c7c"/>
<rect x="993.7" y="87" width="1" height="3" fill="#555555"/>
<rect x="1000.4" y="86" width="1" height="4" fill="#7c7c7c"/>
<rect x="1007.0" y="87" width="1" height="3" fill="#555555"/>
<rect x="1013.7" y="86" width="1" height="4" fill="#7c7c7c"/>
<rect x="1020.4" y="87" width="1" height="3" fill="#555555"/>
<text x="976.1" y="87.5" font-size="6.5" fill="#a8a8a8" font-family="Liberation Sans">9</text>
<rect x="1027.1" y="79" width="1" height="11" fill="#7c7c7c"/>
<rect x="1033.8" y="87" width="1" height="3" fill="#555555"/>
<rect x="1040.5" y="86" width="1" height="4" fill="#7c7c7c"/>
<rect x="1047.2" y="87" width="1" height="3" fill="#555555"/>
<rect x="1053.8" y="86" width="1" height="4" fill="#7c7c7c"/>
<rect x="1060.5" y="87" width="1" height="3" fill="#555555"/>
<rect x="1067.2" y="86" width="1" height="4" fill="#7c7c7c"/>
<rect x="1073.9" y="87" width="1" height="3" fill="#555555"/>
<text x="1029.6" y="87.5" font-size="6.5" fill="#a8a8a8" font-family="Liberation Sans">.5</text>
<rect x="1080.6" y="79" width="1" height="11" fill="#7c7c7c"/>
<rect x="1087.3" y="87" width="1" height="3" fill="#555555"/>
<rect x="1094.0" y="86" width="1" height="4" fill="#7c7c7c"/>
<rect x="1100.7" y="87" width="1" height="3" fill="#555555"/>
<rect x="1107.3" y="86" width="1" height="4" fill="#7c7c7c"/>
<rect x="1114.0" y="87" width="1" height="3" fill="#555555"/>
<rect x="1120.7" y="86" width="1" height="4" fill="#7c7c7c"/>
<rect x="1127.4" y="87" width="1" height="3" fill="#555555"/>
<text x="1083.1" y="87.5" font-size="6.5" fill="#a8a8a8" font-family="Liberation Sans">10</text>
<rect x="1134.1" y="79" width="1" height="11" fill="#7c7c7c"/>
<rect x="1140.8" y="87" width="1" height="3" fill="#555555"/>
<text x="1136.6" y="87.5" font-size="6.5" fill="#a8a8a8" font-family="Liberation Sans">.5</text>
<text x="74" y="87.5" font-size="6.5" fill="#a8a8a8" font-family="Liberation Sans">2</text>
<path d="M64.5,84.5 L71,84.5 M68.5,81 L68.5,89" stroke="#777" stroke-width="1"/>
<rect x="70" y="94.8" width="3" height="1" fill="#555555"/>
<rect x="69" y="101.5" width="4" height="1" fill="#7c7c7c"/>
<rect x="70" y="108.2" width="3" height="1" fill="#555555"/>
<rect x="69" y="114.8" width="4" height="1" fill="#7c7c7c"/>
<rect x="70" y="121.5" width="3" height="1" fill="#555555"/>
<rect x="62" y="128.2" width="11" height="1" fill="#7c7c7c"/>
<rect x="70" y="134.9" width="3" height="1" fill="#555555"/>
<rect x="69" y="141.5" width="4" height="1" fill="#7c7c7c"/>
<rect x="70" y="148.2" width="3" height="1" fill="#555555"/>
<rect x="69" y="154.9" width="4" height="1" fill="#7c7c7c"/>
<rect x="70" y="161.6" width="3" height="1" fill="#555555"/>
<rect x="69" y="168.2" width="4" height="1" fill="#7c7c7c"/>
<rect x="70" y="174.9" width="3" height="1" fill="#555555"/>
<text transform="translate(70,126.2) rotate(-90)" font-size="6.5" fill="#a8a8a8" font-family="Liberation Sans">1</text>
<rect x="62" y="181.6" width="11" height="1" fill="#7c7c7c"/>
<rect x="70" y="188.3" width="3" height="1" fill="#555555"/>
<rect x="69" y="194.9" width="4" height="1" fill="#7c7c7c"/>
<rect x="70" y="201.6" width="3" height="1" fill="#555555"/>
<rect x="69" y="208.3" width="4" height="1" fill="#7c7c7c"/>
<rect x="70" y="215.0" width="3" height="1" fill="#555555"/>
<rect x="69" y="221.6" width="4" height="1" fill="#7c7c7c"/>
<rect x="70" y="228.3" width="3" height="1" fill="#555555"/>
<text transform="translate(70,179.6) rotate(-90)" font-size="6.5" fill="#a8a8a8" font-family="Liberation Sans">1/2</text>
<rect x="62" y="235.0" width="11" height="1" fill="#7c7c7c"/>
<rect x="70" y="241.7" width="3" height="1" fill="#555555"/>
<rect x="69" y="248.3" width="4" height="1" fill="#7c7c7c"/>
<rect x="70" y="255.0" width="3" height="1" fill="#555555"/>
<rect x="69" y="261.7" width="4" height="1" fill="#7c7c7c"/>
<rect x="70" y="268.4" width="3" height="1" fill="#555555"/>
<rect x="69" y="275.1" width="4" height="1" fill="#7c7c7c"/>
<rect x="70" y="281.7" width="3" height="1" fill="#555555"/>
<text transform="translate(70,233.0) rotate(-90)" font-size="6.5" fill="#a8a8a8" font-family="Liberation Sans">5</text>
<rect x="62" y="288.4" width="11" height="1" fill="#7c7c7c"/>
<rect x="70" y="295.1" width="3" height="1" fill="#555555"/>
<rect x="69" y="301.8" width="4" height="1" fill="#7c7c7c"/>
<rect x="70" y="308.4" width="3" height="1" fill="#555555"/>
<rect x="69" y="315.1" width="4" height="1" fill="#7c7c7c"/>
<rect x="70" y="321.8" width="3" height="1" fill="#555555"/>
<rect x="69" y="328.4" width="4" height="1" fill="#7c7c7c"/>
<rect x="70" y="335.1" width="3" height="1" fill="#555555"/>
<text transform="translate(70,286.4) rotate(-90)" font-size="6.5" fill="#a8a8a8" font-family="Liberation Sans">1/2</text>
<rect x="62" y="341.8" width="11" height="1" fill="#7c7c7c"/>
<rect x="70" y="348.5" width="3" height="1" fill="#555555"/>
<rect x="69" y="355.1" width="4" height="1" fill="#7c7c7c"/>
<rect x="70" y="361.8" width="3" height="1" fill="#555555"/>
<rect x="69" y="368.5" width="4" height="1" fill="#7c7c7c"/>
<rect x="70" y="375.2" width="3" height="1" fill="#555555"/>
<rect x="69" y="381.8" width="4" height="1" fill="#7c7c7c"/>
<rect x="70" y="388.5" width="3" height="1" fill="#555555"/>
<text transform="translate(70,339.8) rotate(-90)" font-size="6.5" fill="#a8a8a8" font-family="Liberation Sans">6</text>
<rect x="62" y="395.2" width="11" height="1" fill="#7c7c7c"/>
<rect x="70" y="401.9" width="3" height="1" fill="#555555"/>
<rect x="69" y="408.6" width="4" height="1" fill="#7c7c7c"/>
<rect x="70" y="415.2" width="3" height="1" fill="#555555"/>
<rect x="69" y="421.9" width="4" height="1" fill="#7c7c7c"/>
<rect x="70" y="428.6" width="3" height="1" fill="#555555"/>
<rect x="69" y="435.2" width="4" height="1" fill="#7c7c7c"/>
<rect x="70" y="441.9" width="3" height="1" fill="#555555"/>
<text transform="translate(70,393.2) rotate(-90)" font-size="6.5" fill="#a8a8a8" font-family="Liberation Sans">1/2</text>
<rect x="62" y="448.6" width="11" height="1" fill="#7c7c7c"/>
<rect x="70" y="455.3" width="3" height="1" fill="#555555"/>
<rect x="69" y="461.9" width="4" height="1" fill="#7c7c7c"/>
<rect x="70" y="468.6" width="3" height="1" fill="#555555"/>
<rect x="69" y="475.3" width="4" height="1" fill="#7c7c7c"/>
<rect x="70" y="482.0" width="3" height="1" fill="#555555"/>
<rect x="69" y="488.6" width="4" height="1" fill="#7c7c7c"/>
<rect x="70" y="495.3" width="3" height="1" fill="#555555"/>
<text transform="translate(70,446.6) rotate(-90)" font-size="6.5" fill="#a8a8a8" font-family="Liberation Sans">7</text>
<rect x="62" y="502.0" width="11" height="1" fill="#7c7c7c"/>
<rect x="70" y="508.7" width="3" height="1" fill="#555555"/>
<rect x="69" y="515.4" width="4" height="1" fill="#7c7c7c"/>
<rect x="70" y="522.0" width="3" height="1" fill="#555555"/>
<rect x="69" y="528.7" width="4" height="1" fill="#7c7c7c"/>
<rect x="70" y="535.4" width="3" height="1" fill="#555555"/>
<rect x="69" y="542.0" width="4" height="1" fill="#7c7c7c"/>
<rect x="70" y="548.7" width="3" height="1" fill="#555555"/>
<text transform="translate(70,500.0) rotate(-90)" font-size="6.5" fill="#a8a8a8" font-family="Liberation Sans">1/2</text>
<rect x="62" y="555.4" width="11" height="1" fill="#7c7c7c"/>
<rect x="70" y="562.1" width="3" height="1" fill="#555555"/>
<rect x="69" y="568.8" width="4" height="1" fill="#7c7c7c"/>
<rect x="70" y="575.4" width="3" height="1" fill="#555555"/>
<rect x="69" y="582.1" width="4" height="1" fill="#7c7c7c"/>
<rect x="70" y="588.8" width="3" height="1" fill="#555555"/>
<rect x="69" y="595.4" width="4" height="1" fill="#7c7c7c"/>
<rect x="70" y="602.1" width="3" height="1" fill="#555555"/>
<text transform="translate(70,553.4) rotate(-90)" font-size="6.5" fill="#a8a8a8" font-family="Liberation Sans">8</text>
<rect x="62" y="608.8" width="11" height="1" fill="#7c7c7c"/>
<rect x="70" y="615.5" width="3" height="1" fill="#555555"/>
<rect x="69" y="622.1" width="4" height="1" fill="#7c7c7c"/>
<rect x="70" y="628.8" width="3" height="1" fill="#555555"/>
<rect x="69" y="635.5" width="4" height="1" fill="#7c7c7c"/>
<rect x="70" y="642.2" width="3" height="1" fill="#555555"/>
<rect x="69" y="648.8" width="4" height="1" fill="#7c7c7c"/>
<rect x="70" y="655.5" width="3" height="1" fill="#555555"/>
<text transform="translate(70,606.8) rotate(-90)" font-size="6.5" fill="#a8a8a8" font-family="Liberation Sans">1/2</text>
</svg>
<!-- breadcrumb -->
<div class="abs" style="left:73px;top:90px;width:1075px;height:21px;background:#757575"></div>
<div class="abs" style="left:73px;top:110px;width:1075px;height:1px;background:#6d7596"></div><div class="abs" style="left:73px;top:111px;width:1075px;height:1px;background:#6270b0"></div>
<svg class="ic" style="left:78px;top:94px" width="13" height="13"><path d="M6,1.5 L1.5,6.5 L6,11.5 L6,9 L11.5,9 L11.5,4 L6,4 Z" fill="none" stroke="#d8d8d8" stroke-width="1"/></svg>
<svg class="ic" style="left:98px;top:93px" width="14" height="14"><path d="M7,0.5 L13,4 L7,7.5 L1,4 Z" fill="#d4d4d4"/><path d="M1,6.5 L7,10 L13,6.5 L13,9.5 L7,13 L1,9.5 Z" fill="#d4d4d4"/></svg>
<div class="t u" style="left:116px;top:96px;font-size:9.5px;color:#c4c4c4;letter-spacing:-0.6px">Layer 1</div>
<svg class="ic" style="left:150px;top:94px" width="14" height="14"><rect x="0.5" y="0.5" width="13" height="13" fill="none" stroke="#cfcfcf" stroke-width="1"/><rect x="2.5" y="2.5" width="4" height="4" fill="#cfcfcf"/><rect x="7.5" y="4.5" width="4" height="4" fill="#cfcfcf"/><rect x="3.5" y="7.5" width="4" height="4" fill="#cfcfcf"/></svg>
<div class="t" style="left:166px;top:96px;font-size:9.5px;color:#f2f2f2;letter-spacing:-0.3px">&lt;Group&gt;</div>
<!-- canvas -->
<div class="abs" style="left:73px;top:112px;width:1062px;height:545px;background:#5e5e5e"></div>
<div class="abs" style="left:73px;top:112px;width:1006px;height:545px;background:#fff"></div>
<div class="abs" style="left:1135px;top:112px;width:13px;height:566px;background:#4b4b4b"></div>
<div class="abs" style="left:1136px;top:373px;width:11px;height:21px;background:#6a6a6a;border-radius:5px"></div>
<svg class="ic" style="left:1137px;top:667px" width="9" height="6"><path d="M1,1 L4.5,4.5 L8,1" fill="none" stroke="#aaa" stroke-width="1.1"/></svg>
<svg class="abs" style="left:0;top:0" width="1306" height="693" viewBox="0 0 1306 693">
<defs><clipPath id="ab"><rect x="73" y="112" width="1006" height="545"/></clipPath></defs>
<g clip-path="url(#ab)">
<g fill="none" stroke="#6f6f6f" stroke-width="3"><rect x="-62.82" y="-62.82" width="125.64" height="125.64" rx="25.00" transform="translate(579.10,-15.80) rotate(45)"/><rect x="-62.82" y="-62.82" width="125.64" height="125.64" rx="25.00" transform="translate(490.70,72.60) rotate(45)"/><rect x="-62.82" y="-62.82" width="125.64" height="125.64" rx="25.00" transform="translate(667.50,72.60) rotate(45)"/><rect x="-62.82" y="-62.82" width="125.64" height="125.64" rx="25.00" transform="translate(579.10,161.00) rotate(45)"/></g>
<g fill="#fff"><rect x="-62.82" y="-62.82" width="125.64" height="125.64" rx="25.00" transform="translate(579.10,-15.80) rotate(45)"/><rect x="-62.82" y="-62.82" width="125.64" height="125.64" rx="25.00" transform="translate(490.70,72.60) rotate(45)"/><rect x="-62.82" y="-62.82" width="125.64" height="125.64" rx="25.00" transform="translate(667.50,72.60) rotate(45)"/><rect x="-62.82" y="-62.82" width="125.64" height="125.64" rx="25.00" transform="translate(579.10,161.00) rotate(45)"/></g>
<g fill="none" stroke="#6f6f6f" stroke-width="1.5" stroke-linejoin="miter">
<path d="M231.34,505.66 A8.00,8.00 0 0 1 242.66,505.66 L258.00,521.00 L273.34,505.66 A8.00,8.00 0 0 1 284.66,505.66 L318.84,539.84 A8.00,8.00 0 0 1 318.84,551.16 L285.00,585.00 L231.00,585.00 L197.16,551.16 A8.00,8.00 0 0 1 197.16,539.84 Z"/><path d="M408.94,505.86 A8.00,8.00 0 0 1 420.26,505.86 L474.94,560.54 A8.00,8.00 0 0 1 474.94,571.86 L461.80,585.00 L367.40,585.00 L354.26,571.86 A8.00,8.00 0 0 1 354.26,560.54 Z"/><path d="M607.50,515.20 L596.30,504.00 L544.90,504.00 L510.26,538.64 A8.00,8.00 0 0 0 510.26,549.96 L545.30,585.00 L597.00,585.00 L632.31,549.69 A7.63,7.63 0 0 0 632.31,538.91 L632.30,538.90"/><path d="M904.30,515.10 L893.20,504.00 L841.60,504.00 L806.96,538.64 A8.00,8.00 0 0 0 806.96,549.96 L842.00,585.00 L893.50,585.00 L904.30,574.20"/>
</g>
<g fill="none" stroke="#6f6f6f" stroke-width="3"><rect x="-20.44" y="-20.44" width="40.89" height="40.89" rx="7.00" transform="translate(719.90,487.80) rotate(45)"/><rect x="-20.44" y="-20.44" width="40.89" height="40.89" rx="7.00" transform="translate(692.10,515.60) rotate(45)"/><rect x="-20.44" y="-20.44" width="40.89" height="40.89" rx="7.00" transform="translate(747.70,515.60) rotate(45)"/><rect x="-20.44" y="-20.44" width="40.89" height="40.89" rx="7.00" transform="translate(719.90,543.40) rotate(45)"/><rect x="-20.44" y="-20.44" width="40.89" height="40.89" rx="7.00" transform="translate(719.90,545.20) rotate(45)"/><rect x="-20.44" y="-20.44" width="40.89" height="40.89" rx="7.00" transform="translate(692.10,573.00) rotate(45)"/><rect x="-20.44" y="-20.44" width="40.89" height="40.89" rx="7.00" transform="translate(747.70,573.00) rotate(45)"/><rect x="-20.44" y="-20.44" width="40.89" height="40.89" rx="7.00" transform="translate(719.90,600.80) rotate(45)"/></g>
<g fill="#fff"><rect x="-20.44" y="-20.44" width="40.89" height="40.89" rx="7.00" transform="translate(719.90,487.80) rotate(45)"/><rect x="-20.44" y="-20.44" width="40.89" height="40.89" rx="7.00" transform="translate(692.10,515.60) rotate(45)"/><rect x="-20.44" y="-20.44" width="40.89" height="40.89" rx="7.00" transform="translate(747.70,515.60) rotate(45)"/><rect x="-20.44" y="-20.44" width="40.89" height="40.89" rx="7.00" transform="translate(719.90,543.40) rotate(45)"/><rect x="-20.44" y="-20.44" width="40.89" height="40.89" rx="7.00" transform="translate(719.90,545.20) rotate(45)"/><rect x="-20.44" y="-20.44" width="40.89" height="40.89" rx="7.00" transform="translate(692.10,573.00) rotate(45)"/><rect x="-20.44" y="-20.44" width="40.89" height="40.89" rx="7.00" transform="translate(747.70,573.00) rotate(45)"/><rect x="-20.44" y="-20.44" width="40.89" height="40.89" rx="7.00" transform="translate(719.90,600.80) rotate(45)"/></g>
<g fill="#fff" stroke="#6f6f6f" stroke-width="1.5"><path d="M714.6999999999999,510.40000000000003 Q719.9,513.6 725.1,510.40000000000003 Q721.9,515.6 725.1,520.8000000000001 Q719.9,517.6 714.6999999999999,520.8000000000001 Q717.9,515.6 714.6999999999999,510.40000000000003 Z"/><path d="M714.6999999999999,567.8 Q719.9,571.0 725.1,567.8 Q721.9,573 725.1,578.2 Q719.9,575.0 714.6999999999999,578.2 Q717.9,573 714.6999999999999,567.8 Z"/></g>
<g fill="none" stroke="#000" stroke-width="16" stroke-linejoin="miter" stroke-miterlimit="10">
<path d="M234.90,392.60 L198.27,355.97 A7.00,7.00 0 0 1 198.29,346.05 L234.00,310.66 A7.00,7.00 0 0 1 243.72,310.53 L260.70,326.50 L277.68,310.53 A7.00,7.00 0 0 1 287.40,310.66 L323.11,346.05 A7.00,7.00 0 0 1 323.13,355.97 L286.50,392.60"/><path d="M375.10,393.35 L360.46,378.68 A7.00,7.00 0 0 1 360.49,368.76 L419.38,310.47 A7.00,7.00 0 0 1 429.22,310.47 L488.23,368.88 A7.00,7.00 0 0 1 488.39,378.67 L474.50,393.35"/><path d="M626.20,319.45 L615.10,308.35 L561.75,308.35 L524.65,345.45 A7.00,7.00 0 0 0 524.65,355.35 L561.75,392.45 L615.40,392.45 L652.52,355.33 A7.00,7.00 0 0 0 652.54,345.45 L651.90,344.80"/><path d="M936.20,319.45 L925.10,308.35 L871.75,308.35 L834.65,345.45 A7.00,7.00 0 0 0 834.65,355.35 L871.75,392.45 L925.10,392.45 L936.20,381.35"/>
</g>
<g fill="none" stroke="#5a78c8" stroke-width="2"><rect x="-21.27" y="-21.27" width="42.53" height="42.53" rx="8.00" transform="translate(743.10,290.50) rotate(45)"/><rect x="-21.27" y="-21.27" width="42.53" height="42.53" rx="8.00" transform="translate(713.90,319.70) rotate(45)"/><rect x="-21.27" y="-21.27" width="42.53" height="42.53" rx="8.00" transform="translate(772.30,319.70) rotate(45)"/><rect x="-21.27" y="-21.27" width="42.53" height="42.53" rx="8.00" transform="translate(743.10,348.90) rotate(45)"/><rect x="-21.27" y="-21.27" width="42.53" height="42.53" rx="8.00" transform="translate(743.10,350.60) rotate(45)"/><rect x="-21.27" y="-21.27" width="42.53" height="42.53" rx="8.00" transform="translate(713.90,379.80) rotate(45)"/><rect x="-21.27" y="-21.27" width="42.53" height="42.53" rx="8.00" transform="translate(772.30,379.80) rotate(45)"/><rect x="-21.27" y="-21.27" width="42.53" height="42.53" rx="8.00" transform="translate(743.10,409.00) rotate(45)"/></g>
<g fill="#050505"><rect x="-21.27" y="-21.27" width="42.53" height="42.53" rx="8.00" transform="translate(743.10,290.50) rotate(45)"/><rect x="-21.27" y="-21.27" width="42.53" height="42.53" rx="8.00" transform="translate(713.90,319.70) rotate(45)"/><rect x="-21.27" y="-21.27" width="42.53" height="42.53" rx="8.00" transform="translate(772.30,319.70) rotate(45)"/><rect x="-21.27" y="-21.27" width="42.53" height="42.53" rx="8.00" transform="translate(743.10,348.90) rotate(45)"/><rect x="-21.27" y="-21.27" width="42.53" height="42.53" rx="8.00" transform="translate(743.10,350.60) rotate(45)"/><rect x="-21.27" y="-21.27" width="42.53" height="42.53" rx="8.00" transform="translate(713.90,379.80) rotate(45)"/><rect x="-21.27" y="-21.27" width="42.53" height="42.53" rx="8.00" transform="translate(772.30,379.80) rotate(45)"/><rect x="-21.27" y="-21.27" width="42.53" height="42.53" rx="8.00" transform="translate(743.10,409.00) rotate(45)"/></g>
<g fill="#fff" stroke="#6a86d0" stroke-width="0.8"><path d="M737.2,313.8 Q743.1,317.5 749.0,313.8 Q745.3000000000001,319.7 749.0,325.59999999999997 Q743.1,321.9 737.2,325.59999999999997 Q740.9,319.7 737.2,313.8 Z"/><path d="M737.2,373.90000000000003 Q743.1,377.6 749.0,373.90000000000003 Q745.3000000000001,379.8 749.0,385.7 Q743.1,382.0 737.2,385.7 Q740.9,379.8 737.2,373.90000000000003 Z"/></g>
<g fill="#5a72b8">
<rect x="686" y="265" width="1" height="172"/><rect x="799" y="265" width="1" height="172"/>
</g>
<g fill="#c9d3ee"><rect x="687" y="263" width="112" height="1"/><rect x="687" y="436" width="112" height="1"/></g>
<g fill="none" stroke="#4a5f9e" stroke-width="1">
<path d="M684.5,262 L684.5,265.5 L688.5,265.5 L688.5,262"/><path d="M741.5,262 L741.5,265.5 L745.5,265.5 L745.5,262"/><path d="M797.5,262 L797.5,265.5 L801.5,265.5 L801.5,262"/>
<path d="M684.5,348 L684.5,351.5 L688.5,351.5 L688.5,348"/><path d="M797.5,348 L797.5,351.5 L801.5,351.5 L801.5,348"/>
<path d="M684.5,434 L684.5,437.5 L688.5,437.5 L688.5,434"/><path d="M741.5,434 L741.5,437.5 L745.5,437.5 L745.5,434"/><path d="M797.5,434 L797.5,437.5 L801.5,437.5 L801.5,434"/>
</g>
<path d="M760.5,353.5 L760.5,368.5 L764.5,364.5 L770.5,363.5 Z" fill="#000" stroke="#c8c8c8" stroke-width="1"/>
<rect x="767.5" y="367.5" width="10" height="8" fill="none" stroke="#c8c8c8" stroke-width="1" stroke-dasharray="2,1"/>
</g>
<rect x="73" y="584.5" width="1062" height="1.2" fill="#74e8ee"/>
</svg>

<!-- ============ STATUS ============ -->
<div class="abs" style="left:62px;top:657px;width:1073px;height:21px;background:#535353"></div>
<svg class="ic" style="left:67px;top:662px" width="13" height="13"><circle cx="6.5" cy="6.5" r="6" fill="#bdbdbd"/><text x="6.5" y="10" font-size="9" font-weight="bold" text-anchor="middle" fill="#535353" font-family="Liberation Sans">?</text></svg>
<div class="t" style="left:88px;top:664px;font-size:9px;color:#d6d6d6;letter-spacing:-0.05px">Click the object to select&nbsp; <span style="color:#aaa">|</span>&nbsp; <b>Shift+Click</b> to select multiple object&nbsp; <span style="color:#aaa">|</span>&nbsp; <b>Alt+Drag</b> the object to duplicate</div>
<div class="abs" style="left:62px;top:678px;width:1073px;height:15px;background:#4a4a4a"></div>
<div class="abs" style="left:1135px;top:678px;width:13px;height:15px;background:#545454"></div>
<div class="fld" style="left:65px;top:679px;width:44px;height:14px;background:#3f3f3f"></div>
<div class="t" style="left:68px;top:683px;font-size:9px;color:#ccc">100%</div>
<div class="dd" style="left:109px;top:679px;width:15px;height:14px;background:#444"></div>
<svg class="ic" style="left:112px;top:684px" width="8" height="5"><path d="M1,1 L4,4 L7,1" fill="none" stroke="#ddd" stroke-width="1.2"/></svg>
<div class="fld" style="left:128px;top:679px;width:58px;height:14px;background:#3f3f3f"></div>
<div class="t" style="left:130px;top:683px;font-size:9px;color:#ccc">0&deg;</div>
<svg class="ic" style="left:174px;top:684px" width="8" height="5"><path d="M1,1 L4,4 L7,1" fill="none" stroke="#ddd" stroke-width="1.2"/></svg>
<svg class="ic" style="left:192px;top:681px" width="24" height="10" fill="#bbb"><rect x="1" y="1" width="1.5" height="8"/><path d="M8,1 L3,5 L8,9 Z"/><path d="M22,1 L17,5 L22,9 Z"/></svg>
<div class="fld" style="left:222px;top:679px;width:49px;height:14px;background:#3f3f3f"></div>
<div class="t" style="left:224px;top:683px;font-size:9px;color:#ddd">2</div>
<svg class="ic" style="left:259px;top:684px" width="8" height="5"><path d="M1,1 L4,4 L7,1" fill="none" stroke="#ddd" stroke-width="1.2"/></svg>
<svg class="ic" style="left:278px;top:681px" width="24" height="10" fill="#666"><path d="M2,1 L7,5 L2,9 Z"/><path d="M15,1 L20,5 L15,9 Z"/><rect x="21" y="1" width="1.5" height="8"/></svg>
<div class="sep" style="left:307px;top:679px;height:14px;background:#444"></div>
<div class="t" style="left:373px;top:683px;font-size:9px;color:#d0d0d0;letter-spacing:-0.2px">Selection</div>
<svg class="ic" style="left:481px;top:681px" width="8" height="10" fill="#ddd"><path d="M1,1 L7,5 L1,9 Z"/></svg>
<div class="sep" style="left:492px;top:679px;height:14px;background:#444"></div>
<svg class="ic" style="left:496px;top:681px" width="6" height="9"><path d="M5,1 L1,4.5 L5,8" fill="none" stroke="#999" stroke-width="1"/></svg>
<div class="abs" style="left:848px;top:679px;width:21px;height:12px;background:#666;border-radius:6px"></div>
<svg class="ic" style="left:1124px;top:681px" width="6" height="9"><path d="M1,1 L5,4.5 L1,8" fill="none" stroke="#999" stroke-width="1"/></svg>

<!-- ============ TASK BAR ============ -->
<div class="abs" style="left:678px;top:624px;width:312px;height:30px;background:#4e4e4e;border:1px solid #3e3e3e;border-radius:4px"></div>
<div class="abs" style="left:684px;top:628px;width:3px;height:22px;background:#9a9a9a;border-radius:1.5px"></div>
<div class="abs" style="left:695px;top:629px;width:103px;height:22px;border:1px solid #616161;border-radius:3px"></div>
<svg class="ic" style="left:703px;top:632px" width="16" height="16"><rect x="2.5" y="4.5" width="11" height="10" fill="none" stroke="#c8c8c8" stroke-width="1"/><path d="M4,13 L7,8 L10,11 L12,7 L13,13 Z" fill="#c8c8c8"/><circle cx="3.5" cy="3.5" r="3" fill="#2680eb"/></svg>
<div class="t" style="left:722px;top:636px;font-size:9.5px;color:#e6e6e6;letter-spacing:0.15px">Gen Shape Fill</div>
<div class="abs" style="left:802px;top:629px;width:78px;height:22px;border:1px solid #616161;border-radius:3px"></div>
<svg class="ic" style="left:808px;top:632px" width="17" height="16"><path d="M2,15 L9,6" stroke="#cfcfcf" stroke-width="1.5"/><path d="M9,5 L9,15 L12,12 L15,13 Z" fill="#cfcfcf"/><path d="M4,3 L6,5 M11,1 L11,3 M14,3 L13,4" stroke="#cfcfcf" stroke-width="1"/></svg>
<div class="t" style="left:829px;top:636px;font-size:9.5px;color:#e6e6e6;letter-spacing:0.2px">Edit Path</div>
<div class="abs" style="left:890px;top:632px;width:15px;height:15px;background:#000;border:1px solid #e6e6e6"></div>
<svg class="ic" style="left:913px;top:633px" width="14" height="13" fill="#c8c8c8"><rect x="0" y="1" width="14" height="2"/><rect x="0" y="5.5" width="14" height="2.5"/><rect x="0" y="10" width="14" height="3"/></svg>
<svg class="ic" style="left:939px;top:632px" width="15" height="15"><rect x="1.5" y="2.5" width="11" height="11" fill="none" stroke="#c8c8c8" stroke-width="1"/><path d="M3,13 L12,4 L12,13 Z" fill="#aaa"/><path d="M0,15 L15,0" stroke="#c8c8c8" stroke-width="1.2"/></svg>
<svg class="ic" style="left:964px;top:638px" width="15" height="4" fill="#d0d0d0"><circle cx="2" cy="2" r="1.6"/><circle cx="7.5" cy="2" r="1.6"/><circle cx="13" cy="2" r="1.6"/></svg>

<!-- ============ RIGHT DOCK ============ -->
<div class="abs" style="left:1148px;top:55px;width:158px;height:638px;background:#535353"></div>
<div class="abs" style="left:1148px;top:55px;width:2px;height:638px;background:#3a3a3a"></div>
<div class="abs" style="left:1150px;top:55px;width:156px;height:9px;background:#434343"></div>
<div class="t" style="left:1259px;top:56px;font-size:7px;color:#bbb;letter-spacing:-1px">&lsaquo;&lsaquo;</div>
<div class="t" style="left:1293px;top:56px;font-size:7px;color:#bbb;letter-spacing:-1px">&lsaquo;&lsaquo;</div>
<div class="abs" style="left:1271px;top:64px;width:2px;height:629px;background:#3d3d3d"></div>
<svg class="ic" style="left:1148px;top:55px" width="158" height="638" viewBox="1148 55 158 638">
<rect x="1155" y="75.5" width="112" height="19" rx="1" fill="#3d3d3d"/>
<rect x="1150" y="123.5" width="121" height="1.5" fill="#3e3e3e"/>
<rect x="1150" y="206" width="121" height="1.5" fill="#3e3e3e"/>
<rect x="1150" y="288.5" width="121" height="1.5" fill="#3e3e3e"/>
<rect x="1150" y="430" width="121" height="1.5" fill="#3e3e3e"/>
<rect x="1150" y="512" width="121" height="1.5" fill="#3e3e3e"/>
<g fill="#2e2e2e"><rect x="1200" y="67" width="1" height="4"/><rect x="1202" y="67" width="1" height="4"/><rect x="1204" y="67" width="1" height="4"/><rect x="1208" y="67" width="1" height="4"/><rect x="1210" y="67" width="1" height="4"/></g>
<g fill="#2e2e2e"><rect x="1200" y="126.5" width="1" height="4"/><rect x="1202" y="126.5" width="1" height="4"/><rect x="1204" y="126.5" width="1" height="4"/><rect x="1208" y="126.5" width="1" height="4"/><rect x="1210" y="126.5" width="1" height="4"/></g>
<g fill="#2e2e2e"><rect x="1200" y="209" width="1" height="4"/><rect x="1202" y="209" width="1" height="4"/><rect x="1204" y="209" width="1" height="4"/><rect x="1208" y="209" width="1" height="4"/><rect x="1210" y="209" width="1" height="4"/></g>
<g fill="#2e2e2e"><rect x="1200" y="291.5" width="1" height="4"/><rect x="1202" y="291.5" width="1" height="4"/><rect x="1204" y="291.5" width="1" height="4"/><rect x="1208" y="291.5" width="1" height="4"/><rect x="1210" y="291.5" width="1" height="4"/></g>
<g fill="#2e2e2e"><rect x="1200" y="350" width="1" height="4"/><rect x="1202" y="350" width="1" height="4"/><rect x="1204" y="350" width="1" height="4"/><rect x="1208" y="350" width="1" height="4"/><rect x="1210" y="350" width="1" height="4"/></g>
<g fill="#2e2e2e"><rect x="1200" y="433" width="1" height="4"/><rect x="1202" y="433" width="1" height="4"/><rect x="1204" y="433" width="1" height="4"/><rect x="1208" y="433" width="1" height="4"/><rect x="1210" y="433" width="1" height="4"/></g>
<g transform="translate(1166,85)"><path d="M-7,1 C-8,-5 0,-7 5,-5 C8,-4 8,-1 6,0 C4,1 5,3 3,4 C0,6 -6,5 -7,1Z" fill="#c4c4c4"/><circle cx="-4" cy="-1" r="1.3" fill="#535353"/><circle cx="-1" cy="-3" r="1.3" fill="#535353"/><circle cx="3" cy="-3" r="1.3" fill="#535353"/><circle cx="-2" cy="2" r="1.3" fill="#535353"/></g>
<text x="1182" y="89" font-size="9.3" fill="#f0f0f0" font-family="Liberation Sans" letter-spacing="-0.2">Color</text>
<g transform="translate(1166,109)"><defs><linearGradient id="cg" x1="0" y1="0" x2="1" y2="1"><stop offset="0" stop-color="#111"/><stop offset="1" stop-color="#eee"/></linearGradient></defs><path d="M-6,-7 L-6,7 L7,7 C6,0 1,-6 -6,-7Z" fill="url(#cg)" stroke="#c4c4c4" stroke-width="1"/></g>
<text x="1182" y="113" font-size="9.3" fill="#f0f0f0" font-family="Liberation Sans" letter-spacing="-0.2">Color Guide</text>
<g transform="translate(1166,144)"><g fill="#c4c4c4"><rect x="-8" y="-5" width="7" height="4"/><rect x="0" y="-5" width="8" height="4"/><rect x="-8" y="0" width="4" height="4"/><rect x="-3" y="0" width="11" height="4"/></g><rect x="-8" y="-5" width="16" height="9" fill="none" stroke="#8a8a8a" stroke-width=".5"/></g>
<text x="1182" y="148" font-size="9.3" fill="#f0f0f0" font-family="Liberation Sans" letter-spacing="-0.2">Swatches</text>
<g transform="translate(1166,167.5)"><rect x="-4" y="1" width="8" height="6" fill="#c4c4c4"/><path d="M-2,1 L-5,-6 M0,1 L1,-7 M2,1 L6,-5" stroke="#c4c4c4" stroke-width="1.5"/></g>
<text x="1182" y="171.5" font-size="9.3" fill="#f0f0f0" font-family="Liberation Sans" letter-spacing="-0.2">Brushes</text>
<g transform="translate(1166,191)"><g fill="#c4c4c4"><circle cx="0" cy="-4" r="3"/><circle cx="-4" cy="1" r="3"/><circle cx="4" cy="1" r="3"/><path d="M-1,1 L1,1 L2,7 L-2,7Z"/></g></g>
<text x="1182" y="195" font-size="9.3" fill="#f0f0f0" font-family="Liberation Sans" letter-spacing="-0.2">Symbols</text>
<g transform="translate(1166,227)"><g fill="#c4c4c4"><rect x="-8" y="-6" width="16" height="1.5"/><rect x="-8" y="-2" width="16" height="2.5"/><rect x="-8" y="3" width="16" height="3.5"/></g></g>
<text x="1182" y="231" font-size="9.3" fill="#f0f0f0" font-family="Liberation Sans" letter-spacing="-0.2">Stroke</text>
<g transform="translate(1166,250.5)"><defs><linearGradient id="dg"><stop offset="0" stop-color="#222"/><stop offset="1" stop-color="#ddd"/></linearGradient></defs><rect x="-7.5" y="-6.5" width="15" height="13" fill="url(#dg)" stroke="#c4c4c4" stroke-width="1"/></g>
<text x="1182" y="254.5" font-size="9.3" fill="#f0f0f0" font-family="Liberation Sans" letter-spacing="-0.2">Gradient</text>
<g transform="translate(1166,274.5)"><circle cx="-2" cy="-2" r="5.5" fill="#c4c4c4"/><circle cx="2" cy="2" r="5.5" fill="#8f8f8f" stroke="#c4c4c4" stroke-width="1"/></g>
<text x="1182" y="278.5" font-size="9.3" fill="#f0f0f0" font-family="Liberation Sans" letter-spacing="-0.2">Transparency</text>
<g transform="translate(1166,309)"><circle cx="0" cy="0" r="5.5" fill="#c4c4c4"/><circle cx="0" cy="0" r="7.5" fill="none" stroke="#c4c4c4" stroke-width="1" stroke-dasharray="1.5,1.5"/></g>
<text x="1182" y="313" font-size="9.3" fill="#f0f0f0" font-family="Liberation Sans" letter-spacing="-0.2">Appearance</text>
<g transform="translate(1166,333)"><rect x="-3.5" y="-7.5" width="11" height="11" fill="none" stroke="#c4c4c4" stroke-width="1.2"/><rect x="-8" y="0" width="6" height="6" fill="#8a8a8a" stroke="#c4c4c4" stroke-width="1"/></g>
<text x="1182" y="337" font-size="9.3" fill="#f0f0f0" font-family="Liberation Sans" letter-spacing="-0.2">Graphic Styles</text>
<g transform="translate(1166,368)"><path d="M0,-7 L8,-3 L0,1 L-8,-3Z" fill="#c4c4c4"/><path d="M-8,0 L0,4 L8,0 L8,2 L0,6 L-8,2Z" fill="#c4c4c4"/></g>
<text x="1182" y="372" font-size="9.3" fill="#f0f0f0" font-family="Liberation Sans" letter-spacing="-0.2">Layers</text>
<g transform="translate(1166,391.5)"><path d="M2,-7 L-7,-7 L-7,7 L7,7 L7,-2" fill="none" stroke="#c4c4c4" stroke-width="1.4"/><path d="M-1,1 L7,-7 M2,-7 L7,-7 L7,-2" fill="none" stroke="#c4c4c4" stroke-width="1.4"/></g>
<text x="1182" y="395.5" font-size="9.3" fill="#f0f0f0" font-family="Liberation Sans" letter-spacing="-0.2">Asset Export</text>
<g transform="translate(1166,415)"><rect x="-7.5" y="-7.5" width="10" height="10" fill="none" stroke="#c4c4c4" stroke-width="1.2"/><rect x="-3.5" y="-2.5" width="11" height="10" fill="#535353" stroke="#c4c4c4" stroke-width="1.2"/></g>
<text x="1182" y="419" font-size="9.3" fill="#f0f0f0" font-family="Liberation Sans" letter-spacing="-0.2">Artboards</text>
<g transform="translate(1166,450)"><rect x="-6" y="-6" width="12" height="12" fill="none" stroke="#c4c4c4" stroke-width="1" stroke-dasharray="2,1"/><g fill="#c4c4c4"><rect x="-8" y="-8" width="3" height="3"/><rect x="5" y="-8" width="3" height="3"/><rect x="-8" y="5" width="3" height="3"/><rect x="5" y="5" width="3" height="3"/><rect x="-1" y="-1" width="2" height="2"/></g></g>
<text x="1182" y="454" font-size="9.3" fill="#f0f0f0" font-family="Liberation Sans" letter-spacing="-0.2">Transform</text>
<g transform="translate(1166,474)"><rect x="-7" y="-8" width="1.3" height="16" fill="#c4c4c4"/><rect x="-5" y="-5" width="7" height="4" fill="#c4c4c4"/><rect x="-5" y="1" width="12" height="4" fill="#c4c4c4"/></g>
<text x="1182" y="478" font-size="9.3" fill="#f0f0f0" font-family="Liberation Sans" letter-spacing="-0.2">Align</text>
<g transform="translate(1166,498)"><rect x="-7" y="-7" width="8" height="8" fill="#c4c4c4"/><rect x="-2" y="-2" width="9" height="9" fill="#9a9a9a" stroke="#c4c4c4" stroke-width="1"/></g>
<text x="1182" y="502" font-size="9.3" fill="#f0f0f0" font-family="Liberation Sans" letter-spacing="-0.2">Pathfinder</text>
<rect x="1273" y="99" width="33" height="1.5" fill="#3e3e3e"/><rect x="1273" y="134" width="33" height="1.5" fill="#3e3e3e"/>
<g fill="#2e2e2e"><rect x="1281" y="67" width="1" height="4"/><rect x="1283" y="67" width="1" height="4"/><rect x="1285" y="67" width="1" height="4"/><rect x="1289" y="67" width="1" height="4"/><rect x="1291" y="67" width="1" height="4"/></g>
<g fill="#2e2e2e"><rect x="1281" y="103" width="1" height="4"/><rect x="1283" y="103" width="1" height="4"/><rect x="1285" y="103" width="1" height="4"/><rect x="1289" y="103" width="1" height="4"/><rect x="1291" y="103" width="1" height="4"/></g>
<path d="M1280,79 L1295,79 M1280,85 L1295,85 M1280,91 L1295,91" stroke="#c4c4c4" stroke-width="1"/><circle cx="1290" cy="79" r="2" fill="#535353" stroke="#c4c4c4" stroke-width="1"/><circle cx="1285" cy="85" r="2" fill="#535353" stroke="#c4c4c4" stroke-width="1"/><circle cx="1289" cy="91" r="2" fill="#535353" stroke="#c4c4c4" stroke-width="1"/>
<rect x="1281.5" y="113.5" width="13" height="13" fill="none" stroke="#c4c4c4" stroke-width="1.2"/><path d="M1288,114 L1288,121 L1290.5,119 L1293,121 L1293,114Z" fill="#c4c4c4"/>
</svg>

<!-- ============ COLOR PANEL ============ -->
<div class="abs" style="left:945px;top:65px;width:204px;height:86px;background:#535353;border:1px solid #3a3a3a;box-shadow:0 0 2px rgba(0,0,0,.4)"></div>
<div class="abs" style="left:946px;top:66px;width:202px;height:22px;background:#464646"></div>
<div class="abs" style="left:946px;top:66px;width:43px;height:22px;background:#535353"></div>
<div class="abs" style="left:989px;top:66px;width:1px;height:22px;background:#3c3c3c"></div>
<div class="abs" style="left:1052px;top:66px;width:1px;height:22px;background:#3c3c3c"></div>
<div class="t" style="left:952px;top:72px;font-size:7px;color:#bbb">&#8661;</div>
<div class="t" style="left:959px;top:72px;font-size:9.5px;color:#f0f0f0;letter-spacing:-0.2px">Color</div>
<div class="t" style="left:996px;top:72px;font-size:9.5px;color:#cfcfcf;letter-spacing:-0.2px">Color Guide</div>
<div class="t" style="left:1113px;top:72px;font-size:9px;color:#ddd;letter-spacing:-1px">&gt;&gt;</div>
<div class="abs" style="left:1128px;top:72px;width:1px;height:11px;background:#bbb"></div>
<svg class="ic" style="left:1134px;top:73px" width="10" height="9" fill="#bbb"><rect y="0" width="10" height="1.3"/><rect y="3.5" width="10" height="1.3"/><rect y="7" width="10" height="1.3"/></svg>
<div class="abs" style="left:951px;top:96px;width:11px;height:11px;background:#fff"></div>
<svg class="ic" style="left:951px;top:96px" width="11" height="11"><path d="M0,11 L11,0" stroke="#d9141a" stroke-width="2"/></svg>
<div class="abs" style="left:962px;top:96px;width:11px;height:11px;background:#000"></div>
<div class="abs" style="left:973px;top:96px;width:11px;height:11px;background:#fff"></div>
<div class="t" style="left:1073px;top:98px;font-size:9px;color:#ccc;font-style:italic">#</div>
<div class="fld" style="left:1085px;top:95px;width:49px;height:16px;background:#454545"></div>
<div class="t" style="left:1089px;top:99px;font-size:9.5px;color:#e8e8e8;letter-spacing:-0.3px">000000</div>
<div class="abs" style="left:952px;top:118px;width:182px;height:20px;background:linear-gradient(to right,#e6001a 0%,#ff8c00 10%,#fff200 18%,#8dc63f 30%,#00a651 42%,#00aeef 55%,#2e3192 68%,#92278f 80%,#ec008c 92%,#e6001a 100%)"></div>
<div class="abs" style="left:952px;top:118px;width:182px;height:20px;background:linear-gradient(to bottom,rgba(255,255,255,.95) 0%,rgba(255,255,255,0) 45%,rgba(0,0,0,0) 55%,rgba(0,0,0,.95) 100%)"></div>
<div class="abs" style="left:946px;top:143px;width:202px;height:1px;background:#383838"></div><div class="abs" style="left:946px;top:144px;width:202px;height:6px;background:#535353"></div>
<div class="t" style="left:1038px;top:144px;font-size:5px;color:#2e2e2e;letter-spacing:1px">&#8214; &#8214;</div>

</body></html>
